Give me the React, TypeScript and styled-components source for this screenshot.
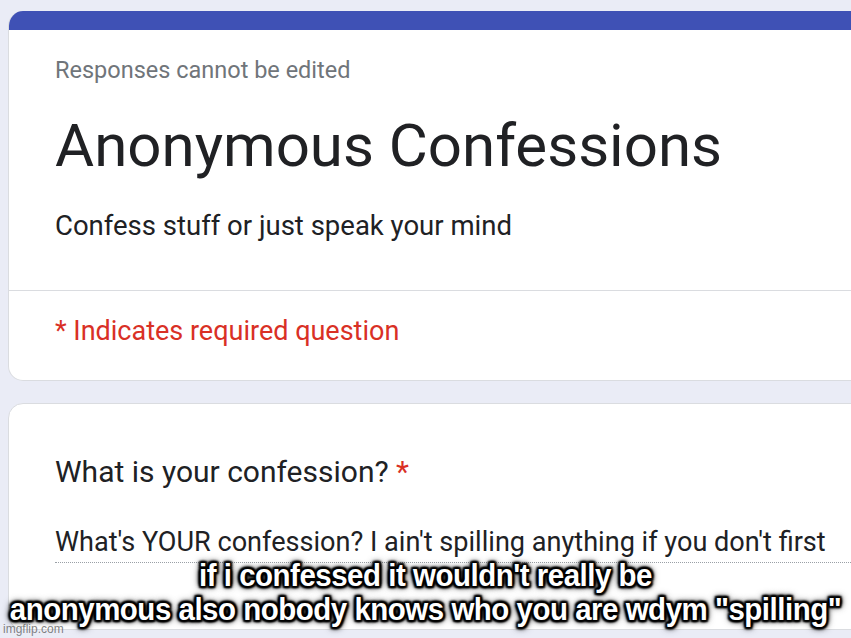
import React from "react";
import styled, { createGlobalStyle } from "styled-components";

const Global = createGlobalStyle`
  html, body { margin: 0; padding: 0; }
  body {
    background: #eaecf6;
    width: 851px;
    height: 638px;
    overflow: hidden;
    font-family: Roboto, "Noto Sans", Arial, sans-serif;
  }
`;

const Page = styled.div`
  position: relative;
  width: 851px;
  height: 638px;
  overflow: hidden;
  padding: 11px 0 0 8px;
  box-sizing: border-box;
  display: flex;
  flex-direction: column;
  gap: 22px;
`;

const Card = styled.section`
  width: 880px;
  flex-shrink: 0;
  background: #fff;
  border: 1px solid #dadce0;
  border-radius: 15px;
  overflow: hidden;
  box-sizing: border-box;
`;

const HeaderCard = styled(Card)`
  border-top: none;
`;

const TopBar = styled.div`
  height: 19px;
  background: #3f51b5;
`;

const Section = styled.div<{ $top: number; $bottom: number }>`
  padding: ${(p) => p.$top}px 0 ${(p) => p.$bottom}px 46px;
`;

const Divider = styled.div`
  height: 1px;
  background: #dadce0;
`;

const Notice = styled.div`
  font-size: 23.5px;
  line-height: 30px;
  color: #70757a;
`;

const Title = styled.h1`
  margin: 25px 0 0;
  font-size: 60px;
  line-height: 72px;
  font-weight: 400;
  color: #202124;
`;

const Description = styled.div`
  margin-top: 27px;
  font-size: 27.5px;
  line-height: 34px;
  color: #202124;
`;

const Required = styled.div`
  font-size: 27px;
  line-height: 34px;
  color: #d93025;
`;

const Question = styled.div`
  font-size: 30px;
  line-height: 36px;
  color: #202124;
`;

const Star = styled.span`
  color: #d93025;
`;

const Answer = styled.div`
  margin-top: 35px;
  padding-bottom: 3px;
  border-bottom: 1px dotted #9aa0a6;
  font-size: 27.1px;
  line-height: 34px;
  color: #202124;
`;

const Caption = styled.div`
  position: absolute;
  left: 0;
  right: 0;
  top: 559px;
  display: flex;
  flex-direction: column;
  align-items: center;
  font-family: "Liberation Sans", Arial, sans-serif;
  font-weight: 700;
  font-size: 31px;
  line-height: 34px;
  letter-spacing: -0.5px;
  color: #fff;
  transform: scaleX(0.95);
  text-shadow:
    2px 2px 2px #000, -2px -2px 2px #000, 2px -2px 2px #000, -2px 2px 2px #000,
    0 2px 2px #000, 0 -2px 2px #000, 2px 0 2px #000, -2px 0 2px #000,
    0 0 5px #000, 0 0 7px #000, 0 0 9px rgba(0, 0, 0, 0.8);
`;

const Line = styled.div`
  white-space: nowrap;
`;

const Watermark = styled.div`
  position: absolute;
  left: 3px;
  bottom: 2px;
  font-family: "Liberation Sans", Arial, sans-serif;
  font-size: 12px;
  line-height: 14px;
  color: rgba(90, 90, 90, 0.75);
`;

export default function App() {
  return (
    <>
      <Global />
      <Page>
        <HeaderCard>
          <TopBar />
          <Section $top={25} $bottom={47}>
            <Notice>Responses cannot be edited</Notice>
            <Title>Anonymous Confessions</Title>
            <Description>Confess stuff or just speak your mind</Description>
          </Section>
          <Divider />
          <Section $top={23} $bottom={32}>
            <Required>* Indicates required question</Required>
          </Section>
        </HeaderCard>
        <Card>
          <Section $top={50} $bottom={66}>
            <Question>
              What is your confession? <Star>*</Star>
            </Question>
            <Answer>
              What's YOUR confession? I ain't spilling anything if you don't first
            </Answer>
          </Section>
        </Card>
        <Caption>
          <Line>if i confessed it wouldn't really be</Line>
          <Line>anonymous also nobody knows who you are wdym "spilling"</Line>
        </Caption>
        <Watermark>imgflip.com</Watermark>
      </Page>
    </>
  );
}
